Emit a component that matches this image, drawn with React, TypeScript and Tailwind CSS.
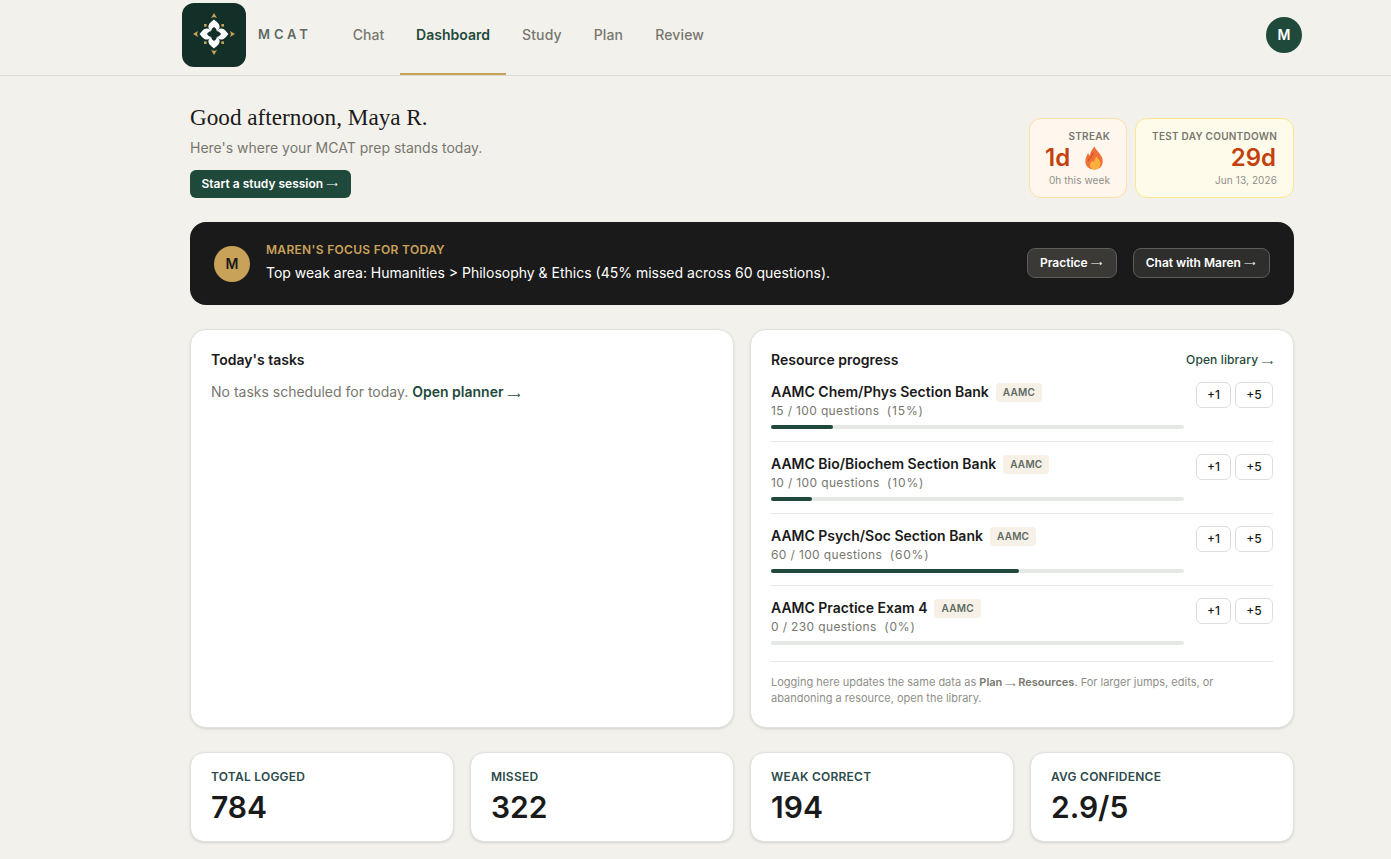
import React from "react";

const navItems = ["Chat", "Dashboard", "Study", "Plan", "Review"];

const resources = [
  { name: "AAMC Chem/Phys Section Bank", done: 15, total: 100 },
  { name: "AAMC Bio/Biochem Section Bank", done: 10, total: 100 },
  { name: "AAMC Psych/Soc Section Bank", done: 60, total: 100 },
  { name: "AAMC Practice Exam 4", done: 0, total: 230 },
];

const stats = [
  { label: "TOTAL LOGGED", value: "784" },
  { label: "MISSED", value: "322" },
  { label: "WEAK CORRECT", value: "194" },
  { label: "AVG CONFIDENCE", value: "2.9/5" },
];

const Arrow = () => <span className="inline-block translate-y-[1px] font-['DejaVu_Sans',sans-serif] text-[0.66em] leading-none font-normal">⟶</span>;

const Logo = () => (
  <div className="flex h-16 w-16 items-center justify-center rounded-xl bg-[#123027]">
    <svg width="64" height="64" viewBox="0 0 64 64">
      <g transform="translate(32 31)">
        {[0, 90, 180, 270].map((deg) => (
          <g key={deg} transform={`rotate(${deg})`}>
            <path
              d="M0 -14.5 C2 -12.5 5.8 -10.5 5.6 -7 C5.5 -5.4 4.4 -3.8 2.8 -3 C2.6 -5 1.4 -6.2 0 -7 C-1.4 -6.2 -2.6 -5 -2.8 -3 C-4.4 -3.8 -5.5 -5.4 -5.6 -7 C-5.8 -10.5 -2 -12.5 0 -14.5 Z"
              fill="#ffffff"
            />
            <path d="M0 -21 L3 -16 L0 -17 L-3 -16 Z" fill="#c9a25a" />
            <rect x="-10" y="-10" width="2.6" height="2.6" fill="#c9a25a" />
          </g>
        ))}
      </g>
    </svg>
  </div>
);

const Flame = () => (
  <svg width="20" height="24" viewBox="0 0 22 24" preserveAspectRatio="none">
    <path d="M11.5 0.5 C12.5 3 15 5 17.5 8 C20 11 21 13.5 20.5 16.5 C20 21 16 23.5 11 23.5 C6 23.5 1.5 20.5 1.5 15.5 C1.5 12 3 9.5 4.5 7 C5 8 5.5 9 6.5 9.5 C7 6 9 3 11.5 0.5 Z" fill="#f0703a" />
    <path d="M7 12 C8 10 9.5 8.5 10 6.5 M4.5 15 C5 13.5 6 12.5 7 12" stroke="#d9521f" strokeWidth="1.4" fill="none" />
    <path d="M13.5 10.5 C15.5 12.5 18 14.5 18 17.5 C18 21 15 23.5 11.5 23.5 C8.5 23.5 6.5 21.5 6.5 19 C6.5 17 8 15.5 9.5 15 C10 15.5 10.5 16 11 16 C11.5 14 12.5 12 13.5 10.5 Z" fill="#fbb03b" />
  </svg>
);

const App = () => {
  return (
    <div className="h-[859px] overflow-hidden bg-[#f3f1ec] font-['Inter',sans-serif] text-[#1a1a1a]">
      <header className="h-[76px] border-b border-[#d9dcd5]">
        <div className="ml-[182px] flex h-[75px] w-[1120px] items-center justify-between">
          <div className="flex h-full items-center">
            <div className="mr-3 mb-[5px]">
              <Logo />
            </div>
            <span className="mb-[5px] w-[79px] text-[13px] font-semibold tracking-[0.3em] text-[#5d6a62]">MCAT</span>
            <nav className="flex h-full items-center">
              {navItems.map((item) =>
                item === "Dashboard" ? (
                  <a key={item} className="flex h-[75px] w-[106px] items-center justify-center border-b-2 border-[#c9a25a] pb-[3px] text-sm font-semibold text-[#1f4a3b]">
                    {item}
                  </a>
                ) : item === "Chat" ? (
                  <a key={item} className="flex h-[75px] w-[63px] items-center justify-center pb-[5px] text-sm font-medium text-[#77776f]">
                    {item}
                  </a>
                ) : (
                  <a key={item} className="flex h-[75px] items-center px-4 pb-[5px] text-sm font-medium tracking-[0.01em] text-[#77776f]">
                    {item}
                  </a>
                )
              )}
            </nav>
          </div>
          <div className="mb-[5px] flex h-9 w-9 items-center justify-center rounded-full bg-[#1f4a3b] text-sm font-semibold text-white">M</div>
        </div>
      </header>

      <main className="ml-[190px] w-[1104px] pt-[24px]">
        <section className="flex h-[98px] items-start justify-between">
          <div className="pt-[3px]">
            <h1 className="h-[28px] font-['Liberation_Serif',serif] text-[23.2px] leading-[28px] font-normal text-[#1a1a1a]">Good afternoon, Maya R.</h1>
            <p className="mt-[7px] text-sm leading-5 text-[#77776f]">Here's where your MCAT prep stands today.</p>
            <button className="mt-[12px] flex h-7 w-[161px] items-center justify-center gap-[3px] rounded-md bg-[#1f4a3b] pr-[2px] text-xs font-semibold text-white">
              Start a study session <Arrow />
            </button>
          </div>
          <div className="mt-[18px] flex gap-2">
            <div className="h-20 w-[98px] rounded-xl border border-[#fddfa8] bg-[#fff6ee] pt-[10px] pr-[16px] pl-[15px] text-right">
              <div className="text-[10px] leading-[14px] font-semibold tracking-wide text-[#77776f]">STREAK</div>
              <div className="mt-[2px] flex h-[26px] items-center justify-between text-2xl font-semibold text-[#c2410c]">
                <span>1d</span>
                <span className="mr-[6px]">
                  <Flame />
                </span>
              </div>
              <div className="mt-[2px] text-[10px] leading-[14px] tracking-[0.01em] text-[#8f8f88]">0h this week</div>
            </div>
            <div className="h-20 w-[159px] rounded-xl border border-[#fde68a] bg-[#fffbeb] pt-[10px] pr-[16px] pl-[15px] text-right">
              <div className="text-[10px] leading-[14px] font-semibold tracking-wide whitespace-nowrap text-[#77776f]">TEST DAY COUNTDOWN</div>
              <div className="mt-[2px] h-[26px] pr-[1px] text-2xl leading-[26px] font-semibold text-[#c2410c]">29d</div>
              <div className="mt-[2px] text-[10px] leading-[14px] tracking-[0.01em] text-[#8f8f88]">Jun 13, 2026</div>
            </div>
          </div>
        </section>

        <section className="mt-[24px] flex h-[83px] items-center justify-between rounded-2xl bg-[#1a1a1a] px-6">
          <div className="flex items-center gap-4">
            <div className="flex h-9 w-9 items-center justify-center rounded-full bg-[#c9a25a] text-sm font-semibold text-[#1a1a1a]">M</div>
            <div className="mb-[2px]">
              <div className="text-xs leading-4 font-semibold tracking-wide text-[#c9a25a]">MAREN'S FOCUS FOR TODAY</div>
              <div className="mt-[5px] text-sm leading-5 font-normal text-white">Top weak area: Humanities &gt; Philosophy &amp; Ethics (45% missed across 60 questions).</div>
            </div>
          </div>
          <div className="mb-[1px] flex gap-4">
            <button className="flex h-[30px] w-[90px] items-center justify-center gap-[3px] rounded-lg border border-[#5c5c58] bg-[#3a3936] pr-[2px] text-xs font-semibold text-white">
              Practice <Arrow />
            </button>
            <button className="flex h-[30px] w-[137px] items-center justify-center gap-[3px] rounded-lg border border-[#5c5c58] bg-[#2e2e2d] pr-[2px] text-xs font-semibold text-white">
              Chat with Maren <Arrow />
            </button>
          </div>
        </section>

        <section className="mt-[24px] grid h-[399px] grid-cols-2 gap-4">
          <div className="rounded-2xl border border-[#dfe3dd] bg-white p-5 shadow-sm">
            <h2 className="text-sm leading-5 font-semibold">Today's tasks</h2>
            <p className="mt-3 text-sm leading-5 text-[#77776f]">
              No tasks scheduled for today. <span className="font-semibold text-[#1f4a3b]">Open planner <Arrow /></span>
            </p>
          </div>
          <div className="rounded-2xl border border-[#dfe3dd] bg-white px-5 pt-5 shadow-sm">
            <div className="flex items-center justify-between">
              <h2 className="text-sm leading-5 font-semibold">Resource progress</h2>
              <span className="text-xs font-medium tracking-[0.01em] text-[#1f4a3b]">Open library <Arrow /></span>
            </div>
            <div>
              {resources.map((r, i) => (
                <div key={r.name} className={i < 3 ? "flex gap-3 border-b border-[#e6e8e4] py-3" : "flex gap-3 pt-3"}>
                  <div className="flex-1">
                    <div className="flex h-5 items-center gap-[7px]">
                      <span className="text-sm font-semibold whitespace-nowrap">{r.name}</span>
                      <span className="flex h-[19px] items-center rounded bg-[#f6f0e6] px-[7px] text-[10px] font-semibold tracking-wide text-[#5d6a62]">AAMC</span>
                    </div>
                    <div className="mt-[1px] text-xs leading-4 tracking-[0.03em] whitespace-pre text-[#77776f]">
                      {r.done} / {r.total} questions  <span className="tracking-[0.07em]">({Math.round((r.done / r.total) * 100)}%)</span>
                    </div>
                    <div className="mt-[6px] h-1 rounded-full bg-[#e4e9e5]">
                      <div className="h-1 rounded-full bg-[#1f4a3b]" style={{ width: `${(r.done / r.total) * 100}%` }} />
                    </div>
                  </div>
                  <div className="flex gap-1">
                    <button className="h-[26px] w-[35px] rounded-md border border-[#dcdfd9] bg-white text-xs font-medium">+1</button>
                    <button className="h-[26px] w-[38px] rounded-md border border-[#dcdfd9] bg-white text-xs font-medium">+5</button>
                  </div>
                </div>
              ))}
            </div>
            <div className="mt-4 border-t border-[#e6e8e4] pt-3">
              <p className="w-[470px] text-[11px] leading-4 text-[#8f8f88]">
                Logging here updates the same data as <span className="font-semibold text-[#77776f]">Plan <Arrow /> Resources</span>. For larger jumps, edits, or abandoning a resource, open the library.
              </p>
            </div>
          </div>
        </section>

        <section className="mt-[24px] grid grid-cols-4 gap-4">
          {stats.map((s) => (
            <div key={s.label} className="h-[90px] rounded-[14px] border border-[#dfe3dd] bg-white px-5 pt-4 shadow-sm">
              <div className="text-xs leading-4 font-semibold tracking-[0.02em] text-[#2c4a4a]">{s.label}</div>
              <div className="mt-1 text-3xl leading-9 font-semibold">{s.value}</div>
            </div>
          ))}
        </section>
      </main>
    </div>
  );
};

export default App;
